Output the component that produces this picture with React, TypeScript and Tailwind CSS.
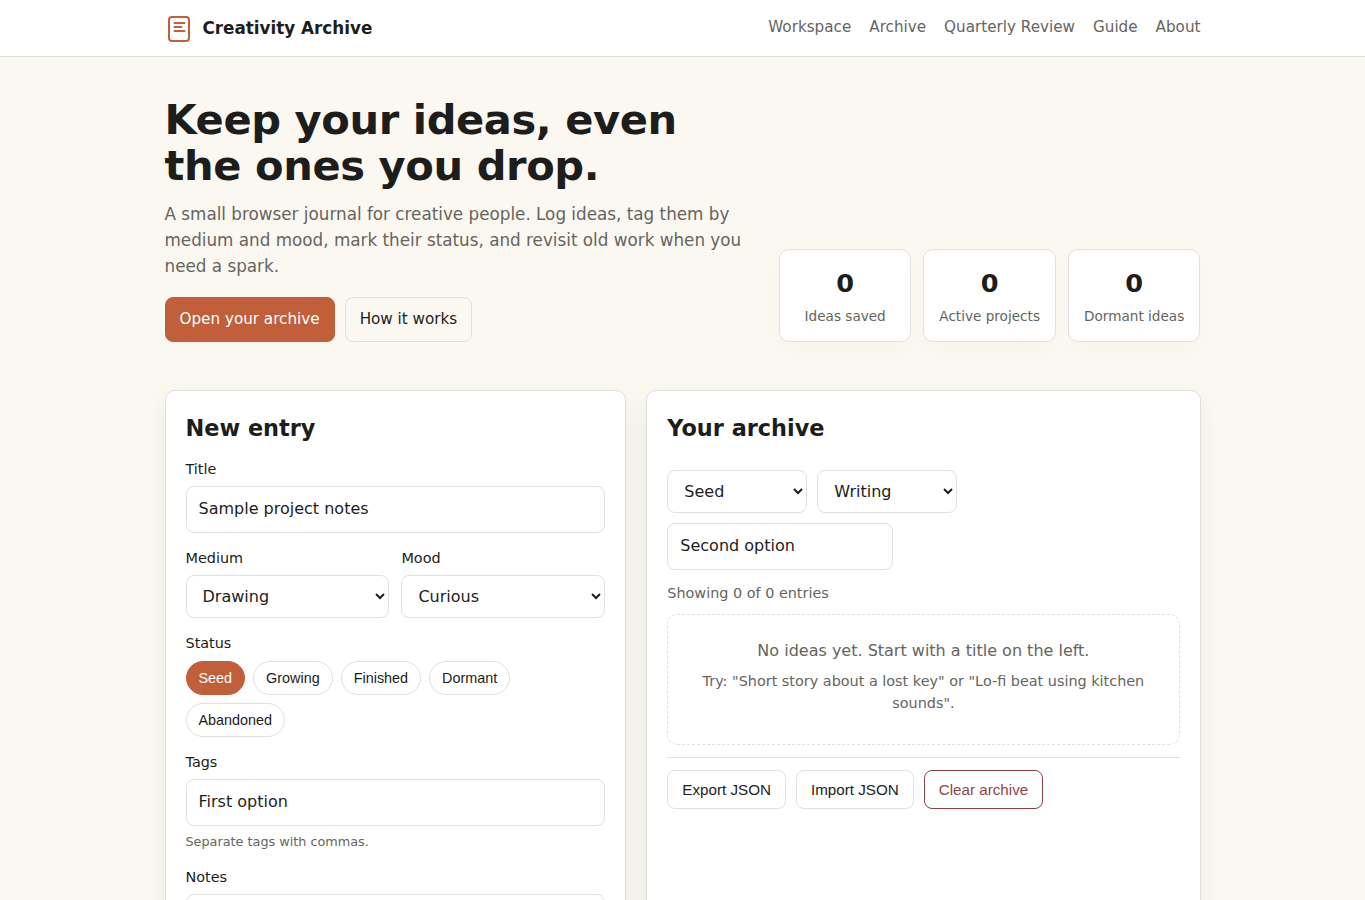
import React from "react";

const field = "block w-full rounded-lg border border-[#e0e0dd] bg-white text-[16px] text-[#1d1d1b] outline-none";
const pillBase = "h-[34px] rounded-full border px-3 pt-px font-[Liberation_Sans,Arial,sans-serif] text-[14.4px]";
const pill = `${pillBase} border-[#e0e0dd]`;
const action = "h-[39px] rounded-lg border px-[14px] pt-px font-[Liberation_Sans,Arial,sans-serif] text-[15.2px]";

function Stat({ label }: { label: string }) {
  return (
    <div className="flex h-[93px] flex-col items-center rounded-[10px] border border-[#e0e0dd] bg-white pt-[13px] shadow-[0_8px_24px_rgba(0,0,0,0.02)]">
      <div className="text-[25.6px] leading-[41px] font-bold">0</div>
      <div className="mt-[1px] text-[13.6px] leading-[22px] text-[#666460]">{label}</div>
    </div>
  );
}

function Select({ value, className = "" }: { value: string; className?: string }) {
  return (
    <select className={`${field} h-[43px] px-3 ${className}`} defaultValue={value}>
      <option>{value}</option>
    </select>
  );
}

export default function App() {
  return (
    <div className="h-[900px] overflow-hidden bg-[#fbf8f2] font-[DejaVu_Sans,sans-serif] text-[16px] leading-[1.6] text-[#1d1d1b]">
      <header className="h-[57px] border-b border-[#e0e0dd] bg-white">
        <div className="mx-auto flex h-14 w-[1036px] items-center justify-between">
          <div className="flex items-center gap-[10px] text-[16.8px] font-bold">
            <svg className="mt-px" width="28" height="29" viewBox="0 0 28 29" fill="none" stroke="#c15f3a" strokeWidth="2">
              <rect x="4" y="3" width="20" height="24" rx="3" />
              <path strokeLinecap="round" d="M9.5 9h10M9.5 13h7M9.5 17h10" />
            </svg>
            Creativity Archive
          </div>
          <nav className="flex gap-[18px] pb-px text-[15.2px] text-[#666460]">
            <a>Workspace</a><a>Archive</a><a>Quarterly Review</a><a>Guide</a><a>About</a>
          </nav>
        </div>
      </header>

      <main className="mx-auto w-[1036px]">
        <section className="flex items-end justify-between pt-10">
          <div className="w-[590px]">
            <h1 className="text-[41.6px] leading-[46px] font-bold tracking-[-0.416px]">Keep your ideas, even<br />the ones you drop.</h1>
            <p className="mt-3 text-[16.8px] leading-[26px] text-[#666460]">A small browser journal for creative people. Log ideas, tag them by<br />medium and mood, mark their status, and revisit old work when you<br />need a spark.</p>
            <div className="mt-[18px] flex gap-[10px] text-[15.2px]">
              <a className="flex h-[45px] items-center rounded-lg border border-[#c15f3a] bg-[#c15f3a] px-[14px] text-white">Open your archive</a>
              <a className="flex h-[45px] items-center rounded-lg border border-[#e0e0dd] px-[14px]">How it works</a>
            </div>
          </div>
          <div className="mr-[0.1px] grid w-[421.5px] grid-cols-3 gap-3">
            <Stat label="Ideas saved" /><Stat label="Active projects" /><Stat label="Dormant ideas" />
          </div>
        </section>

        <section className="mt-12 grid grid-cols-[1fr_1.2fr] gap-5">
          <div className="h-[700px] min-w-0 rounded-[10px] border border-[#e0e0dd] bg-white p-5 shadow-[0_8px_24px_rgba(0,0,0,0.06)]">
            <h2 className="text-[22.4px] leading-[34px] font-bold">New entry</h2>
            <label className="mt-[13px] block text-[14.4px] leading-[23px]">Title</label>
            <input className={`${field} mt-[5px] h-[47px] px-3 pb-[2px]`} defaultValue="Sample project notes" />
            <div className="mt-[14px] grid grid-cols-2 gap-3">
              <div><label className="mb-[5px] block text-[14.4px] leading-[23px]">Medium</label><Select value="Drawing" /></div>
              <div><label className="mb-[5px] block text-[14.4px] leading-[23px]">Mood</label><Select value="Curious" /></div>
            </div>
            <div className="mt-[14px] text-[14.4px] leading-[23px]">Status</div>
            <div className="mt-[6px] flex flex-wrap gap-2">
              <button className={`${pillBase} border-[#c15f3a] bg-[#c15f3a] text-white`}>Seed</button>
              <button className={pill}>Growing</button><button className={pill}>Finished</button><button className={pill}>Dormant</button><button className={pill}>Abandoned</button>
            </div>
            <label className="mt-[14px] block text-[14.4px] leading-[23px]">Tags</label>
            <input className={`${field} mt-[5px] h-[47px] px-3 pb-[2px]`} defaultValue="First option" />
            <p className="mt-[6px] text-[12.8px] leading-5 text-[#666460]">Separate tags with commas.</p>
            <label className="mt-[14px] block text-[14.4px] leading-[23px]">Notes</label>
            <textarea className={`${field} mt-[5px] h-[120px] p-3`} />
          </div>

          <div className="h-[700px] min-w-0 rounded-[10px] border border-[#e0e0dd] bg-white p-5 shadow-[0_8px_24px_rgba(0,0,0,0.06)]">
            <h2 className="text-[22.4px] leading-[34px] font-bold">Your archive</h2>
            <div className="mt-[25px] flex gap-[10px]"><Select value="Seed" className="max-w-[140px]" /><Select value="Writing" className="max-w-[140px]" /></div>
            <input className={`${field} mt-[10px] h-[47px] max-w-[226px] px-3 pb-[2px]`} defaultValue="Second option" />
            <p className="mt-3 text-[14.4px] leading-[23px] text-[#666460]">Showing 0 of 0 entries</p>
            <div className="mt-[9px] h-[131px] rounded-[10px] border border-dashed border-[#e0e0dd] pt-[23px] text-center text-[#666460]">
              <p className="leading-[26px]">No ideas yet. Start with a title on the left.</p>
              <p className="mt-[6px] text-[14.4px] leading-[22px]">Try: "Short story about a lost key" or "Lo-fi beat using kitchen<br />sounds".</p>
            </div>
            <div className="mt-3 flex gap-[10px] border-t border-[#e0e0dd] pt-3">
              <button className={`${action} border-[#e0e0dd]`}>Export JSON</button>
              <button className={`${action} border-[#e0e0dd]`}>Import JSON</button>
              <button className={`${action} border-[#8b4049] text-[#8f454c]`}>Clear archive</button>
            </div>
          </div>
        </section>
      </main>
    </div>
  );
}
